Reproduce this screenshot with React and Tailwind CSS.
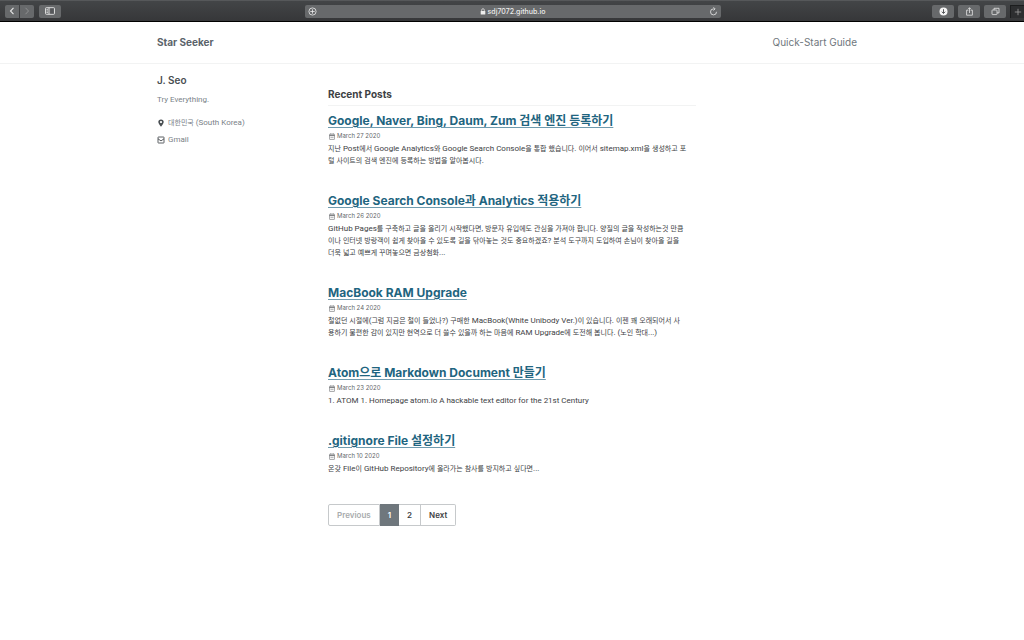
import React from "react";

const posts = [
  {
    title: "Google, Naver, Bing, Daum, Zum 검색 엔진 등록하기",
    date: "March 27 2020",
    lines: [
      "지난 Post에서 Google Analytics와 Google Search Console을 통합 했습니다. 이어서 sitemap.xml을 생성하고 포",
      "털 사이트의 검색 엔진에 등록하는 방법을 알아봅시다.",
    ],
  },
  {
    title: "Google Search Console과 Analytics 적용하기",
    date: "March 26 2020",
    lines: [
      "GitHub Pages를 구축하고 글을 올리기 시작했다면, 방문자 유입에도 관심을 가져야 합니다. 양질의 글을 작성하는것 만큼",
      "이나 인터넷 방랑객이 쉽게 찾아올 수 있도록 길을 닦아놓는 것도 중요하겠죠? 분석 도구까지 도입하여 손님이 찾아올 길을",
      "더욱 넓고 예쁘게 꾸며놓으면 금상첨화...",
    ],
  },
  {
    title: "MacBook RAM Upgrade",
    date: "March 24 2020",
    lines: [
      "철없던 시절에(그럼 지금은 철이 들었나?) 구매한 MacBook(White Unibody Ver.)이 있습니다. 이젠 꽤 오래되어서 사",
      "용하기 불편한 감이 있지만 현역으로 더 쓸수 있을까 하는 마음에 RAM Upgrade에 도전해 봅니다. (노인 학대...)",
    ],
  },
  {
    title: "Atom으로 Markdown Document 만들기",
    date: "March 23 2020",
    lines: ["1. ATOM 1. Homepage atom.io A hackable text editor for the 21st Century"],
  },
  {
    title: ".gitignore File 설정하기",
    date: "March 10 2020",
    lines: ["온갖 File이 GitHub Repository에 올라가는 참사를 방지하고 싶다면..."],
  },
];

// Sets Hangul one size below the Latin text beside it, so the two scripts look even.
function MixedText({ children }) {
  return children.split(/([가-힣]+)/).map((run, i) =>
    i % 2 ? (
      <span key={i} className="text-[7px]">
        {run}
      </span>
    ) : (
      run
    ),
  );
}

function ToolButton({ label, className = "", children }) {
  return (
    <button
      type="button"
      aria-label={label}
      className={`flex h-[13px] items-center justify-center bg-[#67696b] text-[#e6e6e6] ${className}`}
    >
      {children}
    </button>
  );
}

function Toolbar() {
  return (
    <header className="flex h-[22px] items-center border-t border-b border-t-[#56585a] border-b-black bg-linear-to-b from-[#434547] to-[#363739]">
      <div className="flex flex-1 items-center pl-[5px]">
        <ToolButton label="Back" className="w-[14px] rounded-l-[2px]">
          <svg viewBox="0 0 8 8" className="size-2" fill="none" stroke="currentColor" strokeWidth="1.1">
            <path d="M5.5 0.8 2.5 4l3 3.2" />
          </svg>
        </ToolButton>
        <ToolButton label="Forward" className="ml-px w-[14px] rounded-r-[2px]">
          <svg viewBox="0 0 8 8" className="size-2" fill="none" stroke="#98999b" strokeWidth="0.8">
            <path d="M2.5 0.8 5.5 4l-3 3.2" />
          </svg>
        </ToolButton>
        <ToolButton label="Show sidebar" className="ml-[5px] w-[22px] rounded-[2px]">
          <svg viewBox="0 0 10 8" className="h-2 w-[10px]" fill="none" stroke="currentColor" strokeWidth="0.9">
            <rect x="0.5" y="0.7" width="9" height="6.6" rx="0.8" />
            <path d="M4 .7v6.6M1.5 2.4h1.4M1.5 4h1.4M1.5 5.6h1.4" />
            <path d="M5.3 1.5h3.2v5H5.3z" fill="#55575a" stroke="none" />
          </svg>
        </ToolButton>
      </div>
      <div className="mr-1 flex h-[13px] w-[41%] max-w-[416px] items-center rounded-[2px] bg-[#67696b] px-[3px] text-[#ececec]">
        <button type="button" aria-label="Add to reading list">
          <svg viewBox="0 0 9 9" className="size-[9px]" fill="none" stroke="currentColor" strokeWidth="0.8">
            <circle cx="4.5" cy="4.5" r="3.6" />
            <path d="M4.5 2.3v4.4M2.3 4.5h4.4" />
          </svg>
        </button>
        <div className="flex flex-1 items-center justify-center gap-[2px] text-[7px] leading-[13px] font-medium">
          <svg viewBox="0 0 6 7" className="h-[7px] w-[6px]" fill="currentColor">
            <rect x="0.7" y="3" width="4.6" height="3.4" rx="0.5" />
            <path d="M1.7 3.2V2a1.3 1.3 0 0 1 2.6 0v1.2" fill="none" stroke="currentColor" strokeWidth="0.7" />
          </svg>
          <span>sdj7072.github.io</span>
        </div>
        <button type="button" aria-label="Reload">
          <svg viewBox="0 0 9 9" className="size-[9px]" fill="none" stroke="currentColor" strokeWidth="0.8">
            <path d="M5.4 1.9H4.5a3 3 0 1 0 3 2.9" />
            <path d="M4.5 0.3 6.1 1.9 4.5 3.5" />
          </svg>
        </button>
      </div>
      <div className="flex flex-1 items-center justify-end gap-1">
        <ToolButton label="Downloads" className="w-[22px] rounded-[2px]">
          <svg viewBox="0 0 9 9" className="size-[9px]">
            <circle cx="4.5" cy="4.5" r="4" fill="#f5f5f5" />
            <path d="M4.5 2.2v4M2.8 4.7l1.7 1.8 1.7-1.8" fill="none" stroke="#55575a" strokeWidth="1" />
          </svg>
        </ToolButton>
        <ToolButton label="Share" className="w-[22px] rounded-[2px]">
          <svg viewBox="0 0 9 9" className="size-[9px]" fill="none" stroke="currentColor" strokeWidth="0.8">
            <path d="M3.4 3.2H1.6v5h5.8v-5H5.6M4.5 6V.8M3 2.2 4.5.7 6 2.2" />
          </svg>
        </ToolButton>
        <ToolButton label="Show all tabs" className="w-[22px] rounded-[2px]">
          <svg viewBox="0 0 9 9" className="size-[9px]" fill="none" stroke="currentColor" strokeWidth="0.8">
            <rect x="1" y="3" width="5" height="4.6" rx="0.6" />
            <path d="M3 3V1.3h5v4.6H6" />
          </svg>
        </ToolButton>
        <button
          type="button"
          aria-label="New tab"
          className="flex h-[13px] w-[14px] items-center justify-center self-end border-l border-t border-[#1c1d1e] bg-[#2d2e30] text-[#a0a0a0]"
        >
          <svg viewBox="0 0 8 8" className="size-2" fill="none" stroke="currentColor" strokeWidth="0.8">
            <path d="M4 .8v6.4M.8 4h6.4" />
          </svg>
        </button>
      </div>
    </header>
  );
}

function CalendarIcon() {
  return (
    <svg viewBox="0 0 6 7" className="h-[7px] w-[6px]" fill="none" stroke="currentColor" strokeWidth="0.6">
      <rect x="0.4" y="1.2" width="5.2" height="5.2" rx="0.5" />
      <path d="M.4 2.6h5.2" strokeWidth="0.9" />
      <path d="M1.8.2v1.4M4.2.2v1.4" />
      <path d="M1.4 4.4h3.2" strokeWidth="0.5" />
    </svg>
  );
}

function Post({ title, date, lines }) {
  return (
    <article className="mb-6">
      <h3 className="text-[12px] leading-5 font-bold whitespace-nowrap text-[#1f6580]">
        <a href="#post" className="underline decoration-[#6f9bae] decoration-1 underline-offset-2">
          {title}
        </a>
      </h3>
      <p className="mb-[2px] flex items-center gap-[2px] pl-px text-[6px] leading-[10px] text-[#646769]">
        <CalendarIcon />
        <time>{date}</time>
      </p>
      <p className="font-['Roboto','Noto_Sans_CJK_KR',sans-serif] text-[8px] leading-[12px] whitespace-nowrap text-[#3d4144]">
        {lines.map((line) => (
          <span key={line} className="block h-3">
            <MixedText>{line}</MixedText>
          </span>
        ))}
      </p>
    </article>
  );
}

export default function App() {
  return (
    <div className="min-h-screen bg-white font-['Inter','Noto_Sans_CJK_KR',sans-serif] text-[#3d4144]">
      <Toolbar />
      <div className="border-b border-[#f2f3f3] pr-[10px]">
        <nav className="mx-auto flex h-[41px] max-w-[700px] items-center justify-between text-[10px] text-[#6f777d]">
          <a href="#home" className="font-bold text-[#5a636a]">
            Star Seeker
          </a>
          <a href="#guide">Quick-Start Guide</a>
        </nav>
      </div>
      <div className="pr-[10px]">
        <div className="mx-auto flex max-w-[700px]">
          <aside className="w-[171px] shrink-0 pt-2 font-['Roboto','Noto_Sans_CJK_KR',sans-serif] text-[8px] text-[#7a8288]">
            <h2 className="font-['Inter',sans-serif] text-[10px] leading-4 font-semibold text-[#494e52]">J. Seo</h2>
            <p className="mt-[6px] leading-[12px]">Try Everything.</p>
            <ul className="mt-2 leading-[17px]">
              <li className="flex items-center gap-[3px]">
                <svg viewBox="0 0 8 8" className="size-2" fill="#494e52">
                  <path
                    fillRule="evenodd"
                    d="M4 .4a2.7 2.7 0 0 1 2.7 2.7C6.7 4.5 5.3 6 4 7.8 2.7 6 1.3 4.500 1.3 3.1A2.7 2.7 0 0 1 4 .4ZM4 2a1.1 1.1 0 1 0 0 2.2A1.1 1.1 0 0 0 4 2Z"
                  />
                </svg>
                <span className="h-[17px]">
                  <MixedText>대한민국 (South Korea)</MixedText>
                </span>
              </li>
              <li>
                <a href="#mail" className="flex items-center gap-[3px]">
                  <svg viewBox="0 0 8 8" className="size-2" fill="none" stroke="#494e52" strokeWidth="0.9">
                    <rect x="1" y="1" width="6" height="6" rx="0.4" />
                    <path d="M1 2.8 4 4.9l3-2.1" />
                  </svg>
                  Gmail
                </a>
              </li>
            </ul>
          </aside>
          <main className="w-[368px] pt-[22px]">
            <h1 className="mb-[5px] border-b border-[#f2f3f3] pb-[3px] text-[10px] leading-4 font-bold">
              Recent Posts
            </h1>
            {posts.map((post) => (
              <Post key={post.title} {...post} />
            ))}
            <nav aria-label="Pagination" className="mt-[29px] flex text-[8px] leading-5 font-semibold">
              <span className="rounded-l-[2px] border border-[#c6c9cb] px-2 text-[#a8abad]">Previous</span>
              <a href="#page-1" aria-current="page" className="border-y border-[#6f777d] bg-[#6f777d] px-2 text-white">
                1
              </a>
              <a href="#page-2" className="border-y border-r border-[#c6c9cb] px-2">
                2
              </a>
              <a href="#next" className="rounded-r-[2px] border-y border-r border-[#c6c9cb] px-2">
                Next
              </a>
            </nav>
          </main>
        </div>
      </div>
    </div>
  );
}
